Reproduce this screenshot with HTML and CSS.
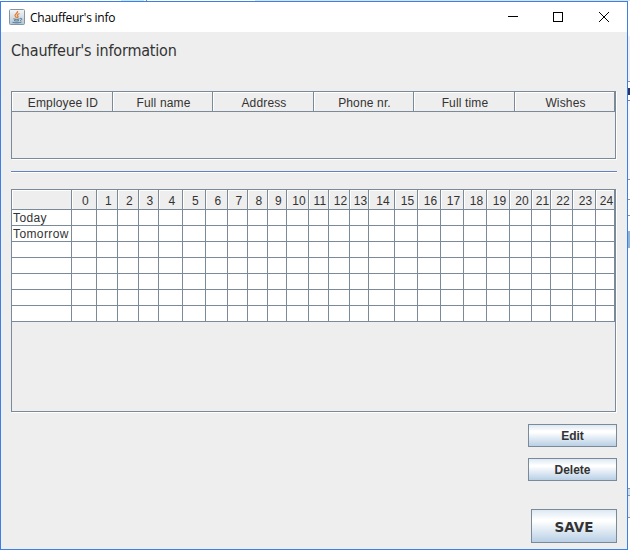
FILE: index.html
```html
<!DOCTYPE html>
<html lang="en">
<head>
<meta charset="utf-8">
<title>Chauffeur's info</title>
<link rel="stylesheet" href="styles.css">
</head>
<body>
<main class="window">
  <header class="titlebar">
    <svg class="java" width="16" height="16" viewBox="0 0 16 16">
      <defs><linearGradient id="tile" x1="0" y1="0" x2="0" y2="1"><stop offset="0" stop-color="#f5f7f8"/><stop offset="1" stop-color="#b4c7d5"/></linearGradient></defs>
      <rect x=".5" y=".5" width="15" height="15" rx="1" fill="url(#tile)" stroke="#8496a4"/>
      <path d="M8.500 2c1 2-3 3-2.500 4.500L7.500 9M10.500 4.500C8 5.500 8 6.500 9 7.500L8.500 9" fill="none" stroke="#e8792b" stroke-width="1.300"/>
      <path d="M4.500 9.800c2 .8 4 .8 6 0M5 11.500c2 .7 3.500.7 5 0M3.500 13.200c3 .9 6 .9 9-.2M11 9.500c3-.6 2 1.800 0 2" fill="none" stroke="#4f7690"/>
    </svg>
    <span class="caption">Chauffeur's info</span>
    <svg class="controls" width="102" height="12" viewBox="0 0 102 12" fill="none" stroke="#000" shape-rendering="crispEdges">
      <path d="M0 5.500h10M45.500 1.500h9v9h-9z"/>
      <path d="M91 1l10 10M101 1l-10 10" shape-rendering="auto"/>
    </svg>
  </header>
  <h1>Chauffeur's information</h1>
  <section class="pane people">
    <table>
      <colgroup><col style="width:101px"><col style="width:100px"><col style="width:101px"><col style="width:100px"><col style="width:101px"><col style="width:100px"></colgroup>
      <thead><tr><th>Employee ID</th><th>Full name</th><th>Address</th><th>Phone nr.</th><th>Full time</th><th>Wishes</th></tr></thead>
    </table>
  </section>
  <hr>
  <section class="pane hours">
    <table id="hours"></table>
  </section>
  <div class="actions">
    <button>Edit</button>
    <button>Delete</button>
    <button class="save">SAVE</button>
  </div>
</main>
<aside class="desk"></aside>
<script src="hours.js"></script>
</body>
</html>
```
FILE: styles.css
```css
* { box-sizing: border-box; }
body {
  margin: 0;
  width: 630px;
  height: 551px;
  padding-top: 1px;
  overflow: hidden;
  display: flex;
  align-items: flex-start;
  background: linear-gradient(90deg, #fff 121px, #cce8ff 121px 144px, #fff 144px 146px, #888 146px 147px, #fff 147px 255px, #dbe5f1 255px) 0 0 / 630px 1px no-repeat #fff;
  font: 12px "Liberation Sans", Arial, sans-serif;
  color: #333;
}
.window { width: 628px; height: 549px; border: 1px solid #3c7fe8; background: #eee; }
.titlebar { height: 30px; padding: 0 17px 0 8px; display: flex; align-items: center; background: #fff; color: #000; }
.caption { margin-left: 5px; font: 12px "Open Sans", sans-serif; letter-spacing: -.25px; }
.controls { margin-left: auto; }
h1 { height: 59px; margin: 0; padding: 9px 0 0 10px; font: 16px/20px "DejaVu Sans Condensed", "DejaVu Sans", sans-serif; font-stretch: condensed; letter-spacing: -.2px; }
.pane { width: 605px; margin-left: 10px; border: 1px solid #7a8a99; box-shadow: 1px 1px #fff; }
.people { height: 68px; }
.hours { height: 223px; }
hr { width: 606px; height: 2px; margin: 12px 0 16px 10px; border: 0; border-top: 1px solid #6382bf; background: #fff; }
table { width: 603px; table-layout: fixed; border-collapse: separate; border-spacing: 0; }
th { height: 20px; padding: 2px 0 0 2px; border-right: 1px solid #7a8a99; border-bottom: 1px solid #7a8a99; box-shadow: inset 1px 1px #fff; font-weight: normal; line-height: 16px; text-align: center; letter-spacing: .15px; white-space: nowrap; }
.hours th { padding-left: 3px; }
td { height: 16px; padding: 2px 0 0 1px; border-right: 1px solid #7a8a99; border-bottom: 1px solid #7a8a99; background: #fff; line-height: 13px; letter-spacing: .4px; white-space: nowrap; }
.actions { margin: 12px 10px 0 0; display: flex; flex-direction: column; align-items: flex-end; }
button { width: 89px; height: 23px; margin-bottom: 11px; padding: 0; border: 1px solid #7a8a99; background: linear-gradient(#dde8f3 0, #fff 30%, #fff 35%, #b8cfe5 100%); color: #333; font: bold 12px "Liberation Sans", Arial, sans-serif; }
.save { width: 86px; height: 34px; margin: 17px 0 0; padding-top: 2px; font: bold 13.5px "DejaVu Sans", sans-serif; }
.desk {
  width: 2px;
  height: 549px;
  background: linear-gradient(#fff 35px, #eef1f8 35px 80px, #8797a8 80px 81px, #fff 81px 87px, #26356b 87px 94px, #fff 94px 99px, #6382bf 99px 100px, #f4f6fa 100px 178px, #8797a8 178px 179px, #fff 179px 198px, #8797a8 198px 199px, #fff 199px 214px, #8797a8 214px 215px, #fff 215px 230px, #8fb4d8 230px 247px, #fff 247px 487px, #8797a8 487px 488px, #cfdeed 488px 494px, #8797a8 494px 495px, #eee 495px 516px, #8797a8 516px 517px, #fff 517px);
}
```
FILE: hours.js
```js
const widths = [60, 25, 21, 21, 20, 24, 23, 22, 20, 20, 19, 22, 20, 21, 19, 26, 23, 23, 23, 23, 23, 22, 19, 22, 23, 19];
const labels = ["Today", "Tomorrow", "", "", "", "", ""];
const blanks = "<td></td>".repeat(25);
document.getElementById("hours").innerHTML =
  "<colgroup>" + widths.map(w => `<col style="width:${w}px">`).join("") + "</colgroup>" +
  "<thead><tr>" + widths.map((w, i) => `<th>${i ? i - 1 : ""}</th>`).join("") + "</tr></thead>" +
  "<tbody>" + labels.map(t => `<tr><td>${t}</td>${blanks}</tr>`).join("") + "</tbody>";
```
